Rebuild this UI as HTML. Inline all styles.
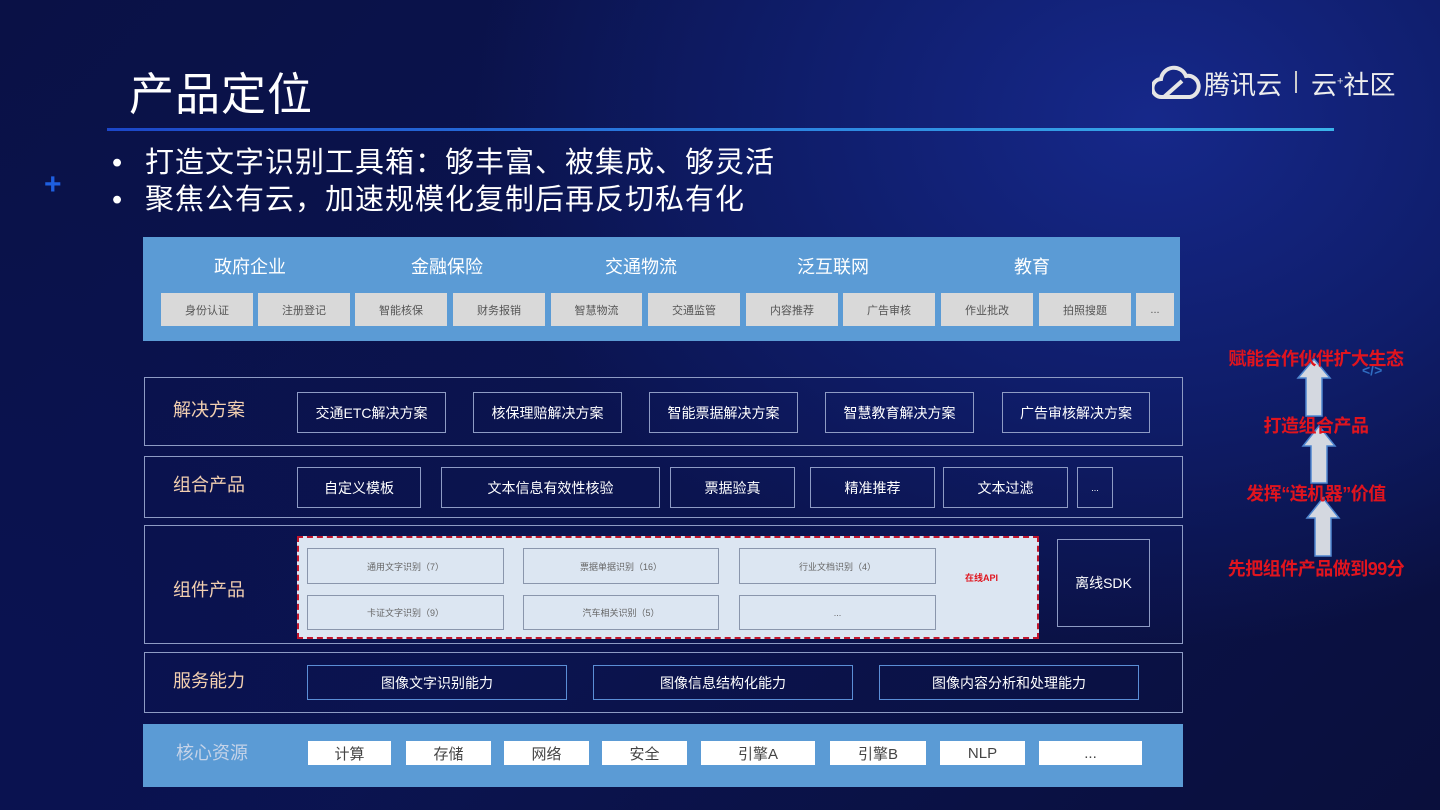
<!DOCTYPE html>
<html><head><meta charset="utf-8"><style>
*{margin:0;padding:0;box-sizing:border-box}
body{width:1440px;height:810px;overflow:hidden;position:relative;font-family:"Liberation Sans","Noto Sans CJK SC",sans-serif;
background:radial-gradient(ellipse 900px 700px at 1150px 120px,#16288a 0%,#0f1d6a 40%,transparent 75%),radial-gradient(ellipse 700px 900px at 0px 700px,#0a1250 0%,transparent 70%),linear-gradient(135deg,#0a1146 0%,#0b1450 50%,#0a0f3c 100%);color:#fff}
.a{position:absolute}
.c{display:flex;align-items:center;justify-content:center}
.tag{position:absolute;top:293px;height:33px;background:#d9d9d9;color:#555;font-size:11px}
.hd{position:absolute;top:253px;font-size:18px;color:#fff;width:150px;text-align:center}
.row{position:absolute;left:144px;width:1039px;border:1px solid #8e9bc4}
.lab{position:absolute;left:173px;font-size:18px;color:#f2cfb0}
.btn{position:absolute;border:1px solid #8e9bc4;font-size:14px;color:#fff}
.sb{position:absolute;border:1px solid #5b8ed6;font-size:14px;color:#fff;top:665px;height:35px}
.ib{position:absolute;border:1px solid #8a96ac;background:#dce6f2;color:#666;font-size:9px}
.wb{position:absolute;top:741px;height:24px;background:#fff;color:#444;font-size:15px}
.rt{position:absolute;color:#e0141e;font-weight:bold;font-size:18px;width:240px;left:1196px;text-align:center;letter-spacing:-0.5px}
</style></head><body>
<div class="a" style="left:129px;top:58px;font-size:45px;letter-spacing:1px">产品定位</div>
<svg class="a" style="left:1152px;top:64px" width="50" height="36" viewBox="0 0 50 36"><path d="M10 33 A9 9 0 0 1 9 15 A13 13 0 0 1 34 12 A10 10 0 0 1 38 33 Z" fill="none" stroke="#e6e6e6" stroke-width="4"/><path d="M12 33 L30 17" stroke="#e6e6e6" stroke-width="4"/></svg>
<div class="a" style="left:1204px;top:65px;font-size:26px;color:#eee">腾讯云</div>
<div class="a" style="left:1295px;top:71px;width:2px;height:22px;background:#ccc"></div>
<div class="a" style="left:1311px;top:65px;font-size:26px;color:#eee">云<sup style="font-size:11px">+</sup>社区</div>
<div class="a" style="left:107px;top:128px;width:1227px;height:3px;background:linear-gradient(90deg,#1c46c8,#2a7fe0 50%,#3bb4ea)"></div>
<div class="a" style="left:44px;top:168px;font-size:30px;color:#1e5fe0;font-weight:bold">+</div>
<div class="a" style="left:112px;top:145px;font-size:29px;line-height:37px;letter-spacing:1px">
<div><span style="display:inline-block;width:33px">•</span>打造文字识别工具箱：够丰富、被集成、够灵活</div>
<div><span style="display:inline-block;width:33px">•</span>聚焦公有云，加速规模化复制后再反切私有化</div></div>

<div class="a" style="left:143px;top:237px;width:1037px;height:104px;background:#5b9bd5"></div>
<div class="hd" style="left:175px">政府企业</div><div class="hd" style="left:372px">金融保险</div><div class="hd" style="left:566px">交通物流</div><div class="hd" style="left:758px">泛互联网</div><div class="hd" style="left:957px">教育</div>
<div class="tag c" style="left:161px;width:92px">身份认证</div>
<div class="tag c" style="left:258px;width:92px">注册登记</div>
<div class="tag c" style="left:355px;width:92px">智能核保</div>
<div class="tag c" style="left:453px;width:92px">财务报销</div>
<div class="tag c" style="left:551px;width:91px">智慧物流</div>
<div class="tag c" style="left:648px;width:92px">交通监管</div>
<div class="tag c" style="left:746px;width:92px">内容推荐</div>
<div class="tag c" style="left:843px;width:92px">广告审核</div>
<div class="tag c" style="left:941px;width:92px">作业批改</div>
<div class="tag c" style="left:1039px;width:92px">拍照搜题</div>
<div class="tag c" style="left:1136px;width:38px">...</div>

<div class="row" style="top:377px;height:69px"></div>
<div class="lab" style="top:396px">解决方案</div>
<div class="btn c" style="left:297px;top:392px;width:149px;height:41px">交通ETC解决方案</div>
<div class="btn c" style="left:473px;top:392px;width:149px;height:41px">核保理赔解决方案</div>
<div class="btn c" style="left:649px;top:392px;width:149px;height:41px">智能票据解决方案</div>
<div class="btn c" style="left:825px;top:392px;width:149px;height:41px">智慧教育解决方案</div>
<div class="btn c" style="left:1002px;top:392px;width:148px;height:41px">广告审核解决方案</div>

<div class="row" style="top:456px;height:62px"></div>
<div class="lab" style="top:471px">组合产品</div>
<div class="btn c" style="left:297px;top:467px;width:124px;height:41px">自定义模板</div>
<div class="btn c" style="left:441px;top:467px;width:219px;height:41px">文本信息有效性核验</div>
<div class="btn c" style="left:670px;top:467px;width:125px;height:41px">票据验真</div>
<div class="btn c" style="left:810px;top:467px;width:125px;height:41px">精准推荐</div>
<div class="btn c" style="left:943px;top:467px;width:125px;height:41px">文本过滤</div>
<div class="btn c" style="left:1077px;top:467px;width:36px;height:41px;font-size:9px">...</div>

<div class="row" style="top:525px;height:119px"></div>
<div class="lab" style="top:576px">组件产品</div>
<div class="a" style="left:297px;top:536px;width:742px;height:103px;background:#dce6f2;border:2px dashed #c0142c"></div>
<div class="ib c" style="left:307px;top:548px;width:197px;height:36px">通用文字识别（7）</div>
<div class="ib c" style="left:523px;top:548px;width:196px;height:36px">票据单据识别（16）</div>
<div class="ib c" style="left:739px;top:548px;width:197px;height:36px">行业文档识别（4）</div>
<div class="ib c" style="left:307px;top:595px;width:197px;height:35px">卡证文字识别（9）</div>
<div class="ib c" style="left:523px;top:595px;width:196px;height:35px">汽车相关识别（5）</div>
<div class="ib c" style="left:739px;top:595px;width:197px;height:35px">...</div>
<div class="a" style="left:965px;top:571px;font-size:9px;color:#e0141e;font-weight:bold">在线API</div>
<div class="btn c" style="left:1057px;top:539px;width:93px;height:88px">离线SDK</div>

<div class="row" style="top:652px;height:61px"></div>
<div class="lab" style="top:667px">服务能力</div>
<div class="sb c" style="left:307px;width:260px">图像文字识别能力</div>
<div class="sb c" style="left:593px;width:260px">图像信息结构化能力</div>
<div class="sb c" style="left:879px;width:260px">图像内容分析和处理能力</div>

<div class="a" style="left:143px;top:724px;width:1040px;height:63px;background:#5b9bd5"></div>
<div class="a" style="left:176px;top:739px;font-size:18px;color:#c5d3e8">核心资源</div>
<div class="wb c" style="left:308px;width:83px">计算</div>
<div class="wb c" style="left:406px;width:85px">存储</div>
<div class="wb c" style="left:504px;width:85px">网络</div>
<div class="wb c" style="left:602px;width:85px">安全</div>
<div class="wb c" style="left:701px;width:114px">引擎A</div>
<div class="wb c" style="left:830px;width:96px">引擎B</div>
<div class="wb c" style="left:940px;width:85px">NLP</div>
<div class="wb c" style="left:1039px;width:103px">...</div>

<svg class="a" style="left:1290px;top:356px" width="60" height="205" viewBox="0 0 60 205">
<g fill="#d4d8e0" stroke="#4f86d0" stroke-width="1.5">
<path d="M24 3 L40 22 L32 22 L32 60 L16 60 L16 22 L8 22 Z"/>
<path d="M29 70 L45 90 L37 90 L37 127 L21 127 L21 90 L13 90 Z"/>
<path d="M33 142 L49 162 L41 162 L41 200 L25 200 L25 162 L17 162 Z"/>
</g></svg>
<div class="a" style="left:1362px;top:362px;font-size:14px;color:#2f6cc0;font-weight:bold">&lt;/&gt;</div>
<div class="rt" style="top:345px">赋能合作伙伴扩大生态</div>
<div class="rt" style="top:412px">打造组合产品</div>
<div class="rt" style="top:480px">发挥“连机器”价值</div>
<div class="rt" style="top:555px">先把组件产品做到99分</div>
</body></html>
